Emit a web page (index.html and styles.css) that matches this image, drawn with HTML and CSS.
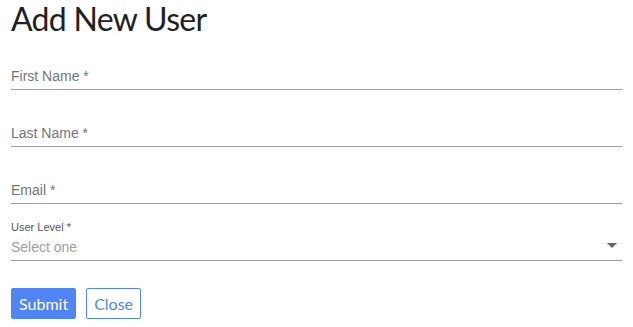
FILE: index.html
```html
<!DOCTYPE html>
<html>
<head>
    <title>Add New User</title>
    <link rel="stylesheet" href="styles.css">
</head>
<body>
    <div class="container">
        <form name="userForm">
            <h1>Add New User</h1>

            <div class="form-group">
                <input type="text" id="firstName" name="firstName" placeholder="First Name *">
            </div>

            <div class="form-group">
                <input type="text" id="lastName" name="lastName" placeholder="Last Name *">
            </div>

            <div class="form-group">
                <input type="text" id="email" name="email" placeholder="Email *">
            </div>

            <div class="form-group select-group">
                <label for="userLevel">User Level *</label>
                <div class="select-wrap">
                    <select id="userLevel" name="userLevel">
                        <option value="">Select one</option>
                        <option value="admin">Admin</option>
                        <option value="user">User</option>
                    </select>
                    <svg class="arrow" width="10" height="5" viewBox="0 0 10 5"><path d="M0 0 L10 0 L5 5 Z" fill="#666"/></svg>
                </div>
            </div>

            <div class="button-group">
                <button type="submit" class="btn btn-primary">Submit</button>
                <button type="button" class="btn btn-outline">Close</button>
            </div>
        </form>
    </div>
</body>
</html>
```

FILE: styles.css
```css
body {
    margin: 0 11px;
    background: #fff;
}

h1 {
    margin: 0 0 -5px 0;
    font-family: Lato, "Open Sans", sans-serif;
    font-size: 32px;
    font-weight: 400;
    letter-spacing: -0.7px;
    line-height: 38px;
    color: #212121;
}

.form-group {
    margin-top: 32px;
}

.form-group input[type="text"],
.form-group select {
    display: block;
    width: 100%;
    height: 25px;
    box-sizing: border-box;
    margin: 0;
    padding: 0 0 3px 0;
    border: none;
    border-bottom: 1px solid #9e9e9e;
    border-radius: 0;
    outline: none;
    background: transparent;
    font-family: "Liberation Sans", Arial, sans-serif;
    font-size: 14px;
    color: #333;
}

.form-group input::placeholder {
    color: #757575;
    opacity: 1;
}

.select-group {
    margin-top: 17px;
}

.select-group label {
    display: block;
    margin-bottom: 2px;
    font-family: "Liberation Sans", Arial, sans-serif;
    font-size: 11px;
    line-height: 13px;
    color: #555;
}

.select-wrap {
    position: relative;
}

.form-group select {
    appearance: none;
    -webkit-appearance: none;
    color: #9e9e9e;
}

.select-wrap .arrow {
    position: absolute;
    right: 5px;
    top: 7px;
}

.button-group {
    display: flex;
    gap: 10px;
    margin-top: 27px;
}

.btn {
    height: 31px;
    padding: 0 7px;
    border-radius: 2px;
    font-family: Lato, "Open Sans", sans-serif;
    font-size: 16px;
    cursor: pointer;
}

.btn-primary {
    background: #4f85f5;
    border: 1px solid #4f85f5;
    color: #fff;
}

.btn-outline {
    background: #fff;
    border: 1px solid #4f85f5;
    color: #4f85f5;
}
```
